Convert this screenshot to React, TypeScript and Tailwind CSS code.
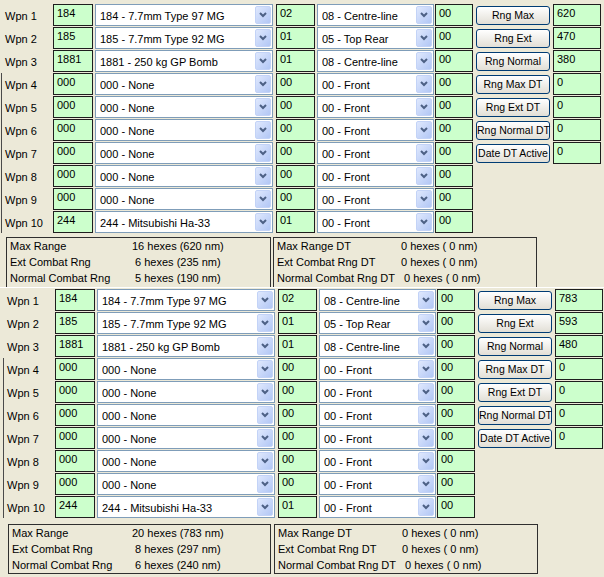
import React from "react";

type Slot = { id: string; name: string; facing: string; pos: string; extra: string };

const slots: Slot[] = [
  { id: "184", name: "184 - 7.7mm Type 97 MG", facing: "02", pos: "08 - Centre-line", extra: "00" },
  { id: "185", name: "185 - 7.7mm Type 92 MG", facing: "01", pos: "05 - Top Rear", extra: "00" },
  { id: "1881", name: "1881 - 250 kg GP Bomb", facing: "01", pos: "08 - Centre-line", extra: "00" },
  { id: "000", name: "000 - None", facing: "00", pos: "00 - Front", extra: "00" },
  { id: "000", name: "000 - None", facing: "00", pos: "00 - Front", extra: "00" },
  { id: "000", name: "000 - None", facing: "00", pos: "00 - Front", extra: "00" },
  { id: "000", name: "000 - None", facing: "00", pos: "00 - Front", extra: "00" },
  { id: "000", name: "000 - None", facing: "00", pos: "00 - Front", extra: "00" },
  { id: "000", name: "000 - None", facing: "00", pos: "00 - Front", extra: "00" },
  { id: "244", name: "244 - Mitsubishi Ha-33", facing: "01", pos: "00 - Front", extra: "00" },
];

const actions = ["Rng Max", "Rng Ext", "Rng Normal", "Rng Max DT", "Rng Ext DT", "Rng Normal DT", "Date DT Active"];

const Field = ({ w, children }: { w: string; children: React.ReactNode }) => (
  <div className={`h-[22px] shrink-0 border border-[#1e1e1e] bg-[#ccffcc] px-[3px] pt-[1px] text-[11px] leading-[14px] ${w}`}>
    {children}
  </div>
);

const Combo = ({ w, value }: { w: string; value: string }) => (
  <div className={`flex h-[22px] shrink-0 items-center border border-[#7f9db9] bg-white pl-[4px] ${w}`}>
    <span className="flex-1 truncate pt-[2px] text-[11px]">{value}</span>
    <div className="m-[1px] flex h-[18px] w-[16px] items-center justify-center rounded-[2px] border border-[#c3d3f7] bg-gradient-to-br from-[#dfe8fd] to-[#b2c7f5]">
      <svg width="8" height="6" viewBox="0 0 8 6">
        <polyline points="1,1 4,4 7,1" fill="none" stroke="#4d6185" strokeWidth="2" />
      </svg>
    </div>
  </div>
);

const Row = ({ n, s, action, value }: { n: number; s: Slot; action?: string; value?: string }) => (
  <div className="flex h-[22px] items-center">
    <div className="w-[48px] shrink-0 pt-[2px] text-[11px]">Wpn {n}</div>
    <Field w="w-[40px]">{s.id}</Field>
    <div className="w-[2px] shrink-0" />
    <Combo w="w-[178px]" value={s.name} />
    <div className="w-[3px] shrink-0" />
    <Field w="w-[39px]">{s.facing}</Field>
    <div className="w-[2px] shrink-0" />
    <Combo w="w-[117px]" value={s.pos} />
    <div className="w-[1px] shrink-0" />
    <Field w="w-[38px]">{s.extra}</Field>
    {action && (
      <>
        <button className="mx-[3px] h-[19px] w-[74px] shrink-0 rounded-[3px] border border-[#003c74] bg-gradient-to-b from-white to-[#e2dfd6] px-0 text-[10.5px] leading-none whitespace-nowrap">
          {action}
        </button>
        <Field w="w-[48px]">{value}</Field>
      </>
    )}
  </div>
);

const Weapons = ({ values }: { values: string[] }) => (
  <div className="flex flex-col gap-[1px]">
    {slots.slice(0, 3).map((s, i) => (
      <Row key={i} n={i + 1} s={s} action={actions[i]} value={values[i]} />
    ))}
    <div className="-ml-[4px] flex flex-col gap-[1px] border-l border-[#4a4a4a] pl-[3px]">
      {slots.slice(3).map((s, i) => (
        <Row key={i} n={i + 4} s={s} action={actions[i + 3]} value={values[i + 3]} />
      ))}
    </div>
  </div>
);

const Line = ({ label, value, w }: { label: string; value: string; w: string }) => (
  <div className="flex whitespace-pre">
    <span className={`shrink-0 ${w}`}>{label}</span>
    <span>{value}</span>
  </div>
);

const RangePanel = ({ lines, w, box }: { lines: [string, string][]; w: string; box: string }) => (
  <div className={`shrink-0 overflow-hidden border border-[#2f2f2f] px-[3px] text-[11px] leading-[16px] ${box}`}>
    {lines.map(([l, v]) => (
      <Line key={l} label={l} value={v} w={w} />
    ))}
  </div>
);

const dtLines: [string, string][] = [
  ["Max Range DT", "0 hexes ( 0 nm)"],
  ["Ext Combat Rng DT", "0 hexes ( 0 nm)"],
  ["Normal Combat Rng DT", " 0 hexes ( 0 nm)"],
];

export default function App() {
  return (
    <div className="h-[577px] w-[604px] overflow-hidden bg-[#ece9d8] pt-[4px] font-['Liberation_Sans',Arial,sans-serif] text-black">
      <div className="pl-[5px]">
        <Weapons values={["620", "470", "380", "0", "0", "0", "0"]} />
      </div>

      <div className="mt-[4px] flex h-[50px] gap-[2px] overflow-hidden pl-[6px]">
        <RangePanel
          box="h-[56px] w-[265px]"
          w="w-[122px]"
          lines={[
            ["Max Range", "16 hexes (620 nm)"],
            ["Ext Combat Rng", " 6 hexes (235 nm)"],
            ["Normal Combat Rng", " 5 hexes (190 nm)"],
          ]}
        />
        <RangePanel box="h-[56px] w-[264px]" w="w-[124px]" lines={dtLines} />
      </div>

      <div className="border-t border-white pl-[7px] pt-[1px]">
        <Weapons values={["783", "593", "480", "0", "0", "0", "0"]} />
      </div>

      <div className="mt-[6px] flex gap-[3px] pl-[8px]">
        <RangePanel
          box="h-[50px] w-[263px]"
          w="w-[120px]"
          lines={[
            ["Max Range", "20 hexes (783 nm)"],
            ["Ext Combat Rng", " 8 hexes (297 nm)"],
            ["Normal Combat Rng", " 6 hexes (240 nm)"],
          ]}
        />
        <RangePanel box="h-[50px] w-[264px]" w="w-[124px]" lines={dtLines} />
      </div>
    </div>
  );
}
